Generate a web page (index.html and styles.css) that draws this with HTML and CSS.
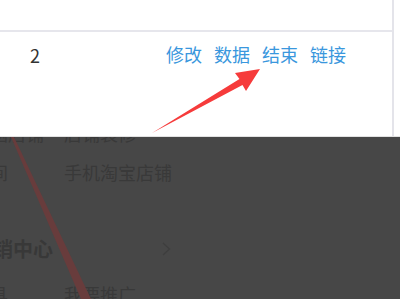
FILE: index.html
```html
<!DOCTYPE html>
<html lang="zh-CN">
<head>
<meta charset="utf-8">
<link rel="stylesheet" href="styles.css">
</head>
<body>
<div class="page">
  <div class="panel">
    <div class="table">
      <div class="row row-head"></div>
      <div class="row row-data">
        <div class="cell-num">2</div>
        <div class="cell-links">
          <a class="link">修改</a>
          <a class="link">数据</a>
          <a class="link">结束</a>
          <a class="link">链接</a>
        </div>
      </div>
    </div>
    <svg class="arrow" width="400" height="137" viewBox="0 0 400 137">
      <polygon points="152,133 239.5,79 235,73 260,69 246,91 242.5,85" fill="#f63b3b"/>
    </svg>
  </div>
  <div class="dim">
    <div class="dim-inner">
      <div class="drow"><span class="dlabel">淘宝电脑店铺</span><span>店铺装修</span></div>
      <div class="drow drow-second"><span class="dlabel">营业时间</span><span>手机淘宝店铺</span></div>
      <div class="dhead"><span>营销中心</span>
        <svg class="chev" width="9" height="14" viewBox="0 0 9 14"><polyline points="1,1 7.5,7 1,13" fill="none" stroke="#3e3e3e" stroke-width="1.3"/></svg>
      </div>
      <div class="drow drow-last"><span class="dlabel">营销工具</span><span>我要推广</span></div>
    </div>
    <svg class="stripe" width="400" height="162" viewBox="0 0 400 162">
      <polygon points="11,0 14,0 91,162 81,162" fill="#683c3c"/>
    </svg>
  </div>
</div>
</body>
</html>
```

FILE: styles.css
```css
html, body {
  margin: 0;
  padding: 0;
}
body {
  width: 400px;
  height: 299px;
  overflow: hidden;
  background: #474747;
  font-family: "Noto Sans CJK SC", "Noto Sans", sans-serif;
}
.page {
  width: 400px;
  height: 299px;
  overflow: hidden;
}
.panel {
  position: relative;
  height: 136px;
  background: #ffffff;
  border-bottom: 1px solid #e2e2e2;
}
.table {
  width: 392px;
  height: 136px;
  border-right: 2px solid #e4e4ea;
}
.row-head {
  height: 30px;
  border-bottom: 2px solid #e6e6ec;
}
.row-data {
  display: flex;
  align-items: flex-start;
  padding-top: 10px;
  height: 94px;
}
.cell-num {
  width: 166px;
  padding-left: 30px;
  box-sizing: border-box;
  font-size: 18px;
  line-height: 26px;
  color: #333333;
}
.cell-links {
  display: flex;
  gap: 12px;
}
.link {
  font-size: 18px;
  line-height: 24px;
  color: #3a97dd;
  text-decoration: none;
}
.arrow {
  position: absolute;
  left: 0;
  top: 0;
}
.dim {
  position: relative;
  height: 162px;
  overflow: hidden;
  background: #474747;
  color: #393939;
}
.dim-inner {
  margin-top: -22px;
}
.drow {
  display: flex;
  height: 36px;
  line-height: 36px;
  font-size: 18px;
  margin-left: -64px;
  white-space: nowrap;
}
.drow-second {
  margin-top: 3px;
}
.dlabel {
  width: 128px;
  flex: none;
}
.dhead {
  display: flex;
  align-items: center;
  justify-content: space-between;
  width: 198px;
  height: 36px;
  line-height: 36px;
  margin-top: 41px;
  margin-left: -27px;
  font-size: 20px;
  font-weight: bold;
  color: #383838;
  white-space: nowrap;
}
.chev {
  display: block;
}
.drow-last {
  margin-top: 9px;
}
.stripe {
  position: absolute;
  left: 0;
  top: 0;
}
```
